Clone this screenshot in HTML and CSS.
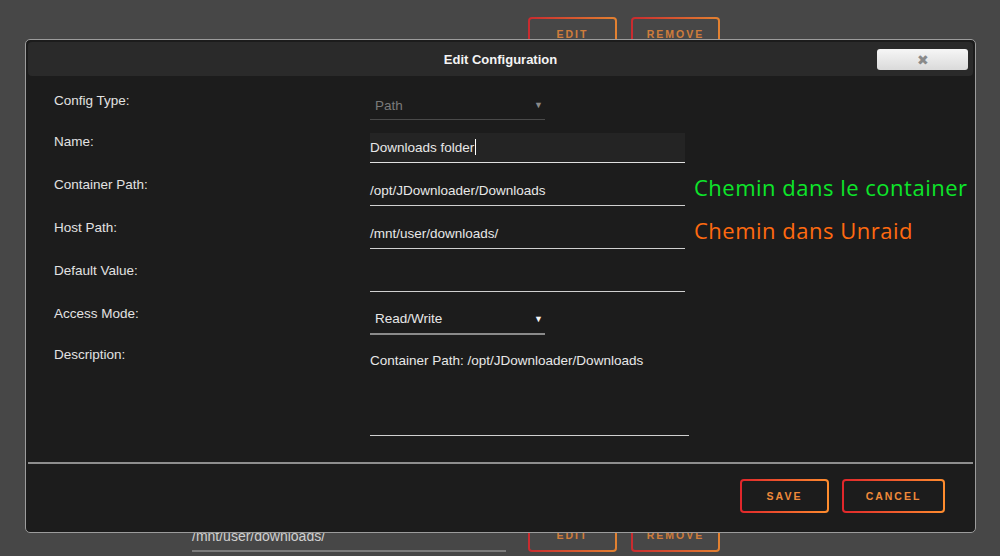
FILE: index.html
```html
<html lang="fr">
<head>
    <meta charset="UTF-8">
    <meta name="viewport" content="width=device-width, initial-scale=1.0">
    <title>Edit Configuration</title>

    <link rel="stylesheet" href="styles.css">
</head>
<body>

    <!-- page behind the popup -->
    <main class="page">
        <div class="page-row top">
            <button class="btn">EDIT</button>
            <button class="btn">REMOVE</button>
        </div>
        <div class="page-row bottom">
            <div class="page-input">/mnt/user/downloads/</div>
            <button class="btn">EDIT</button>
            <button class="btn">REMOVE</button>
        </div>
    </main>

    <section class="dialog">
        <header class="dlg-title">
            <span>Edit Configuration</span>
            <button class="close">&#10006;</button>
        </header>

        <div class="dlg-body">
            <div class="label first">Config Type:</div>
            <div class="field select disabled"><span>Path</span><span class="arrow">&#9660;</span></div>
            <div></div>

            <div class="label">Name:</div>
            <div class="field text focused">Downloads folder<span class="caret"></span></div>
            <div></div>

            <div class="label">Container Path:</div>
            <div class="field text">/opt/JDownloader/Downloads</div>
            <div class="note green">Chemin dans le container</div>

            <div class="label">Host Path:</div>
            <div class="field text">/mnt/user/downloads/</div>
            <div class="note orange">Chemin dans Unraid</div>

            <div class="label">Default Value:</div>
            <div class="field text"></div>
            <div></div>

            <div class="label">Access Mode:</div>
            <div class="field select"><span>Read/Write</span><span class="arrow">&#9660;</span></div>
            <div></div>

            <div class="label last">Description:</div>
            <div class="field area">Container Path: /opt/JDownloader/Downloads</div>
            <div></div>
        </div>

        <footer class="dlg-footer">
            <button class="btn save">SAVE</button>
            <button class="btn cancel">CANCEL</button>
        </footer>
    </section>

</body>
</html>
```

FILE: styles.css
```css
html,
body {
  margin: 0;
  height: 100%;
  overflow: hidden;
  background-color: #474747;
  font-family: "Liberation Sans", Arial, sans-serif;
  font-size: 13.5px;
  color: #e4e4e4;
}

/* buttons with the red/orange gradient frame */
.btn {
  height: 34px;
  width: 89px;
  padding: 0;
  border: 2px solid transparent;
  border-radius: 4px;
  background: linear-gradient(#1c1c1c, #1c1c1c) padding-box,
              linear-gradient(90deg, #e0262b, #ff8d2e) border-box;
  color: #f08a3a;
  font-family: "Liberation Sans", Arial, sans-serif;
  font-size: 10.5px;
  font-weight: bold;
  letter-spacing: 2px;
}

.btn.cancel {
  width: 103px;
}

/* page behind */
.page {
  height: 100%;
  box-sizing: border-box;
  padding: 17px 0 4px;
  display: flex;
  flex-direction: column;
  justify-content: space-between;
}

.page-row {
  display: flex;
  align-items: flex-end;
  gap: 14px;
  padding-left: 528px;
}

.page-row .btn {
  background: linear-gradient(#474747, #474747) padding-box,
              linear-gradient(90deg, #e0262b, #ff8d2e) border-box;
  color: #e8873a;
  opacity: .85;
}

.page-row.bottom {
  padding-left: 192px;
}

.page-input {
  width: 314px;
  margin-right: 8px;
  padding-bottom: 6px;
  border-bottom: 2px solid #7c7c7c;
  color: #cfcfcf;
  font-size: 14px;
}

/* popup */
.dialog {
  position: absolute;
  left: 25px;
  top: 39px;
  width: 945px;
  height: 488px;
  padding: 2px;
  border: 1px solid #9c9c9c;
  border-radius: 5px;
  background: #1c1c1c;
  display: flex;
  flex-direction: column;
}

.dlg-title {
  height: 34px;
  flex: none;
  border-radius: 4px;
  background: #2a2a2a;
  display: flex;
  align-items: center;
  justify-content: center;
  position: relative;
  font-size: 13px;
  font-weight: bold;
  color: #f4f4f4;
}

.close {
  position: absolute;
  right: 5px;
  top: 7px;
  width: 91px;
  height: 21px;
  border: 0;
  border-radius: 3px;
  background: linear-gradient(#f6f6f6, #dadada);
  color: #8a8a8a;
  font-size: 14px;
  padding: 0;
}

.dlg-body {
  flex: 1;
  padding: 14px 0 0 26px;
  display: grid;
  grid-template-columns: 316px 315px 1fr;
  grid-auto-rows: min-content;
  row-gap: 13px;
  align-content: start;
  border-bottom: 2px solid #8e8e8e;
}

.label {
  line-height: 16px;
  padding-top: 1px;
  color: #e2e2e2;
}

.label.first {
  padding-top: 3px;
}

.label.last {
  padding-top: 0;
  margin-top: -1px;
}

.field {
  height: 29px;
  line-height: 30px;
  border-bottom: 1px solid #d0d0d0;
  color: #e8e8e8;
  white-space: nowrap;
}

.field.focused {
  background: #242424;
  border-bottom-color: #e0e0e0;
}

.caret {
  display: inline-block;
  width: 1px;
  height: 16px;
  margin-left: 1px;
  vertical-align: -3px;
  background: #ffffff;
}

.field.select {
  width: 175px;
  box-sizing: border-box;
  padding: 0 2px 0 5px;
  display: flex;
  justify-content: space-between;
  border-bottom: 2px solid #8a8a8a;
  height: 30px;
  line-height: 28px;
}

.field.select.disabled {
  color: #7a7a7a;
  border-bottom: 1px solid #4a4a4a;
  line-height: 31px;
}

.arrow {
  font-size: 9px;
  color: #f4f4f4;
}

.disabled .arrow {
  color: #8a8a8a;
}

.field.area {
  width: 319px;
  height: 82px;
  line-height: 16px;
  padding-top: 5px;
  white-space: normal;
}

.note {
  padding: 0 0 0 9px;
  font-family: "Open Sans", sans-serif;
  font-size: 22px;
  letter-spacing: 0.5px;
  line-height: 22px;
  white-space: nowrap;
}

.green {
  color: #0de62a;
}

.orange {
  color: #ff6a10;
}

.dlg-footer {
  flex: none;
  display: flex;
  justify-content: flex-end;
  gap: 13px;
  padding: 15px 28px 17px;
}
```
